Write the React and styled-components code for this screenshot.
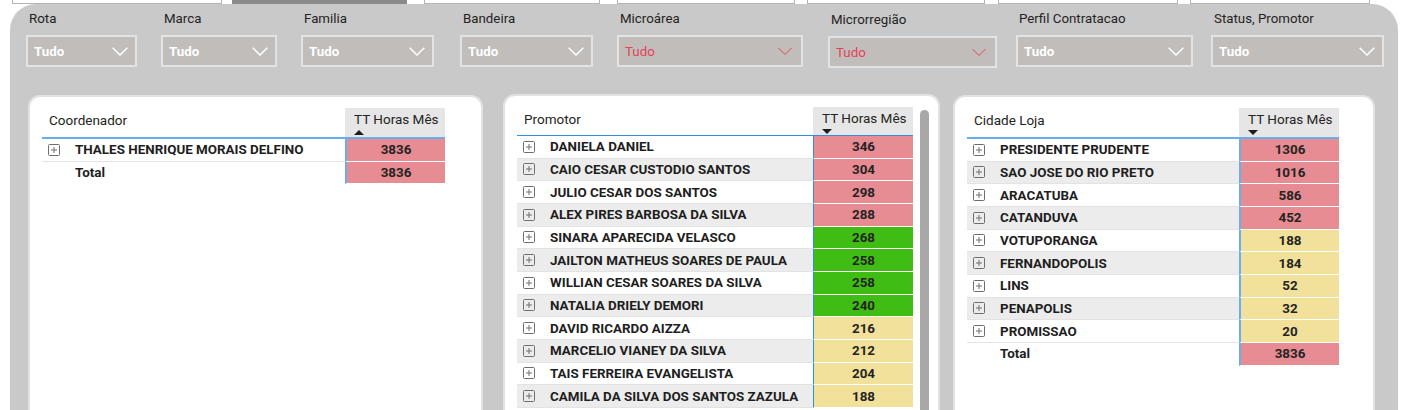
import React from "react";
import styled, { createGlobalStyle } from "styled-components";

const FONT = `Roboto, "Liberation Sans", Arial, sans-serif`;

const GlobalStyle = createGlobalStyle`
  html, body { margin: 0; padding: 0; background: #ffffff; }
  body { font-family: ${FONT}; width: 1402px; height: 410px; overflow: hidden; }
  * { box-sizing: border-box; }
`;

const Page = styled.div`
  width: 1402px;
  height: 410px;
  overflow: hidden;
  background: #ffffff;
  display: flex;
  flex-direction: column;
`;

const TopStrip = styled.div`
  height: 4px;
  display: flex;
  flex-shrink: 0;
`;

const TopTab = styled.div`
  width: ${(p) => p.$w}px;
  margin-left: ${(p) => p.$ml}px;
  height: 4px;
  background: ${(p) => (p.$dark ? "#8a8a8a" : "#ffffff")};
  border: 1px solid ${(p) => (p.$dark ? "#8a8a8a" : "#b4b4b4")};
  border-top: none;
`;

const Panel = styled.div`
  margin-left: 10px;
  width: 1388px;
  flex: 1;
  background: #c9c9c9;
  border-radius: 26px 26px 0 0;
  display: flex;
  flex-direction: column;
`;

const FilterRow = styled.div`
  display: flex;
  align-items: flex-start;
  height: 91px;
  padding-left: 16px;
  flex-shrink: 0;
`;

const Slicer = styled.div`
  width: ${(p) => p.$w}px;
  margin-left: ${(p) => p.$ml}px;
  padding-top: ${(p) => 7 + (p.$dy || 0)}px;
  display: flex;
  flex-direction: column;
`;

const SlicerLabel = styled.div`
  font-size: 13.3px;
  line-height: 16px;
  height: 16px;
  color: #252423;
  padding-left: 3px;
  margin-bottom: 8px;
  white-space: nowrap;
`;

const Dropdown = styled.div`
  height: 32px;
  background: #c0bdba;
  border: 2px solid #e3e3e3;
  display: flex;
  align-items: center;
  justify-content: space-between;
  padding: 0 ${(p) => (p.$red ? 9 : 7)}px 0 6px;
`;

const DropText = styled.span`
  font-size: 13.3px;
  font-weight: ${(p) => (p.$red ? 400 : 700)};
  color: ${(p) => (p.$red ? "#e2445a" : "#ffffff")};
`;

const CardsRow = styled.div`
  display: flex;
  align-items: stretch;
  flex: 1;
  padding-left: 18px;
`;

const Card = styled.div`
  width: ${(p) => p.$w}px;
  margin-left: ${(p) => p.$ml}px;
  margin-top: ${(p) => p.$mt || 0}px;
  margin-bottom: -20px;
  background: #ffffff;
  border: 2px solid #e2e2e2;
  border-bottom: none;
  border-radius: 12px 12px 0 0;
  padding: 11px 0 0 12px;
  display: flex;
  align-items: flex-start;
`;

const Table = styled.div`
  width: ${(p) => p.$w}px;
  display: flex;
  flex-direction: column;
`;

const HeadRow = styled.div`
  display: flex;
  height: ${(p) => (p.$thin ? 29 : 31)}px;
  border-bottom: ${(p) => (p.$thin ? "1px solid #2f8fe6" : "2px solid #66afef")};
`;

const HeadName = styled.div`
  flex: 1;
  font-size: 13.5px;
  line-height: 16px;
  color: #252423;
  padding: 4px 0 0 7px;
`;

const HeadValue = styled.div`
  width: 100px;
  background: #e6e6e6;
  padding: 3px 0 0 9px;
  display: flex;
  flex-direction: column;
  align-items: flex-start;
`;

const HeadValueText = styled.div`
  font-size: 13.5px;
  line-height: 16px;
  color: #252423;
  white-space: nowrap;
`;

const SortArrow = styled.svg`
  margin-top: 3px;
  display: block;
`;

const Row = styled.div`
  display: flex;
  height: 22.67px;
`;

const NameCell = styled.div`
  flex: 1;
  display: flex;
  align-items: center;
  padding-left: ${(p) => (p.$total ? 33 : 6)}px;
  background: ${(p) => (p.$alt ? "#ececec" : "#ffffff")};
  border-bottom: 1px solid ${(p) => (p.$total ? "transparent" : "#e3e3e3")};
  font-size: 13.4px;
  font-weight: 700;
  color: #1e1e1e;
  white-space: nowrap;
  overflow: hidden;
`;

const NameText = styled.span`
  margin-left: ${(p) => (p.$icon ? 15 : 0)}px;
`;

const ValueCell = styled.div`
  width: 100px;
  display: flex;
  align-items: center;
  justify-content: center;
  background: ${(p) => p.$bg};
  border-left: ${(p) => (p.$thin ? "1px solid #2f8fe6" : "2px solid #66afef")};
  border-bottom: 1px solid #ffffff;
  font-size: 13.4px;
  font-weight: 700;
  color: #252423;
`;

const Scrollbar = styled.div`
  width: 9px;
  margin-left: 7px;
  margin-top: 3px;
  align-self: stretch;
  background: #a8a8a8;
  border-radius: 5px;
`;

const PINK = "#e78c92";
const GREEN = "#40bd14";
const YELLOW = "#f1e19b";

const Chevron = ({ red }) =>
  red ? (
    <svg width="14" height="9" viewBox="0 0 14 9">
      <polyline points="0.5,1 7,7.5 13.5,1" fill="none" stroke="#e2445a" strokeWidth="1" />
    </svg>
  ) : (
    <svg width="16" height="9" viewBox="0 0 16 9">
      <polyline points="0.7,0.8 8,8 15.3,0.8" fill="none" stroke="#ffffff" strokeWidth="1.5" />
    </svg>
  );

const ExpandIcon = () => (
  <svg width="12" height="12" viewBox="0 0 12 12">
    <rect x="0.5" y="0.5" width="11" height="11" rx="1" fill="none" stroke="#6e6e6e" strokeWidth="1" />
    <line x1="3" y1="6" x2="9" y2="6" stroke="#6e6e6e" strokeWidth="1" />
    <line x1="6" y1="3" x2="6" y2="9" stroke="#6e6e6e" strokeWidth="1" />
  </svg>
);

const Arrow = ({ up }) => (
  <SortArrow width="10" height="5" viewBox="0 0 10 5">
    {up ? <polygon points="0,5 10,5 5,0" fill="#1e1e1e" /> : <polygon points="0,0 10,0 5,5" fill="#1e1e1e" />}
  </SortArrow>
);

const topTabs = [
  { w: 210, ml: 12 },
  { w: 175, ml: 10, dark: true },
  { w: 176, ml: 17 },
  { w: 178, ml: 17 },
  { w: 178, ml: 12 },
  { w: 180, ml: 13 },
  { w: 180, ml: 12 },
];

const slicers = [
  { label: "Rota", w: 111, ml: 0 },
  { label: "Marca", w: 116, ml: 24 },
  { label: "Familia", w: 133, ml: 24 },
  { label: "Bandeira", w: 133, ml: 26 },
  { label: "Microárea", w: 186, ml: 24, red: true },
  { label: "Microrregião", w: 169, ml: 25, red: true, dy: 1 },
  { label: "Perfil Contratacao", w: 177, ml: 19 },
  { label: "Status, Promotor", w: 173, ml: 18 },
];

const cards = [
  {
    w: 455,
    ml: 0,
    tableW: 403,
    header: "Coordenador",
    up: true,
    rows: [
      { name: "THALES HENRIQUE MORAIS DELFINO", v: 3836, c: PINK },
      { name: "Total", v: 3836, c: PINK, total: true },
    ],
    noAlt: true,
  },
  {
    w: 437,
    ml: 20,
    mt: -1,
    tableW: 396,
    header: "Promotor",
    thin: true,
    scroll: true,
    rows: [
      { name: "DANIELA DANIEL", v: 346, c: PINK },
      { name: "CAIO CESAR CUSTODIO SANTOS", v: 304, c: PINK },
      { name: "JULIO CESAR DOS SANTOS", v: 298, c: PINK },
      { name: "ALEX PIRES BARBOSA DA SILVA", v: 288, c: PINK },
      { name: "SINARA APARECIDA VELASCO", v: 268, c: GREEN },
      { name: "JAILTON MATHEUS SOARES DE PAULA", v: 258, c: GREEN },
      { name: "WILLIAN CESAR SOARES DA SILVA", v: 258, c: GREEN },
      { name: "NATALIA DRIELY DEMORI", v: 240, c: GREEN },
      { name: "DAVID RICARDO AIZZA", v: 216, c: YELLOW },
      { name: "MARCELIO VIANEY DA SILVA", v: 212, c: YELLOW },
      { name: "TAIS FERREIRA EVANGELISTA", v: 204, c: YELLOW },
      { name: "CAMILA DA SILVA DOS SANTOS ZAZULA", v: 188, c: YELLOW },
    ],
  },
  {
    w: 422,
    ml: 13,
    tableW: 372,
    header: "Cidade Loja",
    rows: [
      { name: "PRESIDENTE PRUDENTE", v: 1306, c: PINK },
      { name: "SAO JOSE DO RIO PRETO", v: 1016, c: PINK },
      { name: "ARACATUBA", v: 586, c: PINK },
      { name: "CATANDUVA", v: 452, c: PINK },
      { name: "VOTUPORANGA", v: 188, c: YELLOW },
      { name: "FERNANDOPOLIS", v: 184, c: YELLOW },
      { name: "LINS", v: 52, c: YELLOW },
      { name: "PENAPOLIS", v: 32, c: YELLOW },
      { name: "PROMISSAO", v: 20, c: YELLOW },
      { name: "Total", v: 3836, c: PINK, total: true },
    ],
  },
];

export default function App() {
  return (
    <Page>
      <GlobalStyle />
      <TopStrip>
        {topTabs.map((t, i) => (
          <TopTab key={i} $w={t.w} $ml={t.ml} $dark={t.dark} />
        ))}
      </TopStrip>
      <Panel>
        <FilterRow>
          {slicers.map((s) => (
            <Slicer key={s.label} $w={s.w} $ml={s.ml} $dy={s.dy}>
              <SlicerLabel>{s.label}</SlicerLabel>
              <Dropdown $red={s.red}>
                <DropText $red={s.red}>Tudo</DropText>
                <Chevron red={s.red} />
              </Dropdown>
            </Slicer>
          ))}
        </FilterRow>
        <CardsRow>
          {cards.map((c) => (
            <Card key={c.header} $w={c.w} $ml={c.ml} $mt={c.mt}>
              <Table $w={c.tableW}>
                <HeadRow $thin={c.thin}>
                  <HeadName>{c.header}</HeadName>
                  <HeadValue>
                    <HeadValueText>TT Horas Mês</HeadValueText>
                    <Arrow up={c.up} />
                  </HeadValue>
                </HeadRow>
                {c.rows.map((r, i) => (
                  <Row key={r.name}>
                    <NameCell $alt={!c.noAlt && !r.total && i % 2 === 1} $total={r.total}>
                      {!r.total && <ExpandIcon />}
                      <NameText $icon={!r.total}>{r.name}</NameText>
                    </NameCell>
                    <ValueCell $bg={r.c} $thin={c.thin}>
                      {r.v}
                    </ValueCell>
                  </Row>
                ))}
              </Table>
              {c.scroll && <Scrollbar />}
            </Card>
          ))}
        </CardsRow>
      </Panel>
    </Page>
  );
}
